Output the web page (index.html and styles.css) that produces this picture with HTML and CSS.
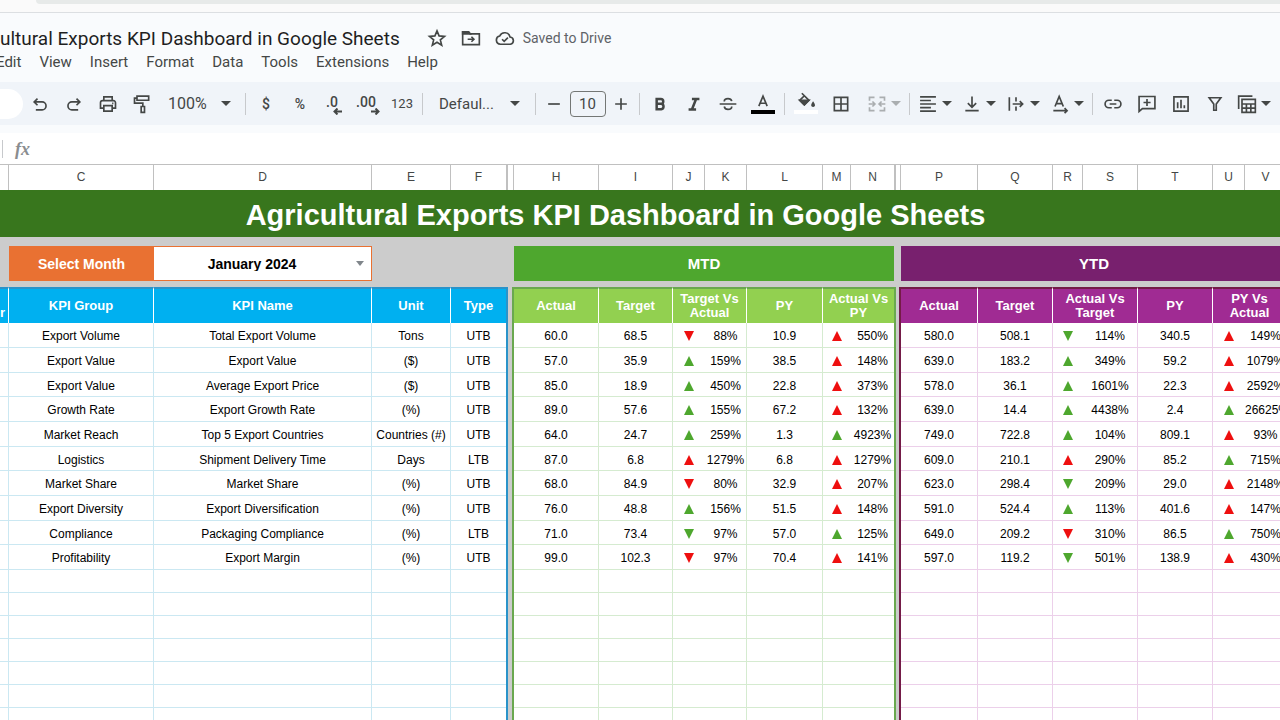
FILE: index.html
```html
<!DOCTYPE html>
<html lang="en">
<head>
  <meta charset="UTF-8" />
  <meta name="viewport" content="width=device-width, initial-scale=1.0" />
  <title>Agricultural Exports KPI Dashboard in Google Sheets</title>
  <link rel="stylesheet" href="styles.css">
</head>
<body>
  <div class="browser-strip"><div class="address-bar"></div></div>

  <header class="doc-header">
    <div class="doc-title-row">
      <h1 class="doc-title">ultural Exports KPI Dashboard in Google Sheets</h1>
      <div class="doc-actions">
        <button class="plain" aria-label="Star">
          <svg class="icon" viewBox="0 0 24 24"><path d="M12 3.500l2.500 6 6.500.5-5 4.200 1.600 6.400-5.600-3.500-5.600 3.500L8 14.200l-5-4.200 6.500-.5z"/></svg>
        </button>
        <button class="plain" aria-label="Move">
          <svg class="icon" viewBox="0 0 24 24"><path d="M2 4.500h7l2 2.500h11v13H2z"/><path d="M2 4.500h7l2 2.500H2z" fill="currentColor"/><path d="M8 13.500h7M12.500 10.500l3 3-3 3"/></svg>
        </button>
        <button class="plain saved">
          <svg class="icon" viewBox="0 0 24 24"><path d="M6.500 19.500a5 5 0 0 1-.8-9.900A6.500 6.500 0 0 1 18 10.800a4.400 4.400 0 0 1 .5 8.700z"/><path d="M8.500 13.500l2.500 2.500 4.500-4.500"/></svg>
          <span>Saved to Drive</span>
        </button>
      </div>
    </div>
    <nav class="menu">
      <button class="plain">Edit</button>
      <button class="plain">View</button>
      <button class="plain">Insert</button>
      <button class="plain">Format</button>
      <button class="plain">Data</button>
      <button class="plain">Tools</button>
      <button class="plain">Extensions</button>
      <button class="plain">Help</button>
    </nav>
  </header>

  <div class="toolbar">
    <input class="menu-search" type="text" aria-label="Search the menus">
    <button class="tool" aria-label="Undo"><svg class="icon" viewBox="0 0 24 24"><path d="M9 5.500L5 9.500l4 4M5 9.500h9.500a4.750 4.750 0 0 1 0 9.500H7"/></svg></button>
    <button class="tool" aria-label="Redo"><svg class="icon" viewBox="0 0 24 24"><path d="M15 5.500l4 4-4 4M19 9.500H9.500a4.750 4.750 0 0 0 0 9.500H17"/></svg></button>
    <button class="tool" aria-label="Print"><svg class="icon" viewBox="0 0 24 24"><path d="M7 8V3.500h10V8M6.500 17H3v-6.500A2.500 2.500 0 0 1 5.500 8h13a2.500 2.500 0 0 1 2.500 2.500V17h-3.500M7 14h10v6.500H7z"/><path d="M17 11.200h1.500"/></svg></button>
    <button class="tool" aria-label="Paint format"><svg class="icon" viewBox="0 0 24 24"><path d="M6 2.500h14v5H6zM6 5H3v6h10v4M11 15h4v7h-4z"/></svg></button>
    <div class="picker zoom">
      <select aria-label="Zoom"><option>100%</option></select><span class="caret"></span>
    </div>
    <span class="sep"></span>
    <button class="tool symbol">$</button>
    <button class="tool symbol">%</button>
    <button class="tool decimal" aria-label="Decrease decimal places"><span>.0</span><svg class="tiny-arrow" viewBox="0 0 9 7"><path d="M9 3.500H1.500M4.500 .5l-3 3 3 3"/></svg></button>
    <button class="tool decimal" aria-label="Increase decimal places"><span>.00</span><svg class="tiny-arrow" viewBox="0 0 9 7"><path d="M0 3.500h7.500M4.500 .5l3 3-3 3"/></svg></button>
    <button class="tool small">123</button>
    <span class="sep"></span>
    <div class="picker font">
      <select aria-label="Font"><option>Defaul...</option></select><span class="caret"></span>
    </div>
    <span class="sep"></span>
    <div class="font-size">
      <button class="step" aria-label="Decrease font size"><svg class="icon" viewBox="0 0 24 24"><path d="M5 12h14"/></svg></button>
      <input type="text" value="10" aria-label="Font size">
      <button class="step" aria-label="Increase font size"><svg class="icon" viewBox="0 0 24 24"><path d="M5 12h14M12 5v14"/></svg></button>
    </div>
    <span class="sep"></span>
    <button class="tool" aria-label="Bold"><svg class="icon heavy" viewBox="0 0 24 24"><path d="M8 6h5a2.900 2.900 0 0 1 0 5.800H8zM8 11.800h5.500a3.300 3.300 0 0 1 0 6.500H8z"/></svg></button>
    <button class="tool" aria-label="Italic"><svg class="icon heavy" viewBox="0 0 24 24"><path d="M9.500 6h9M5.500 18.500h9M14.500 6l-5 12.500"/></svg></button>
    <button class="tool" aria-label="Strikethrough"><svg class="icon" viewBox="0 0 24 24"><path d="M2 12h20M16.500 8.500C16 6.500 14.500 5.500 12 5.500S7.500 6.500 7.500 9M7.500 15c.5 2.500 2 3.500 4.500 3.500s4.500-1 4.500-3.500"/></svg></button>
    <button class="tool swatch text-color" aria-label="Text color"><svg class="icon" viewBox="0 0 24 24"><path d="M7 17L12 5l5 12M8.500 13.500h7"/></svg></button>
    <span class="sep"></span>
    <button class="tool swatch fill-color" aria-label="Fill color"><svg class="icon" viewBox="0 0 24 24"><path d="M7 1.500l8.500 8.500-5.500 5.500L4.500 10 10 4.500"/><path d="M4.500 10h11l-5.500 5.500z" fill="currentColor"/><path d="M20.500 13c2 3 1.500 4 0 4s-2-1 0-4z" fill="currentColor"/></svg></button>
    <button class="tool" aria-label="Borders"><svg class="icon" viewBox="0 0 24 24"><path d="M4 4h16v16H4zM4 12h16M12 4v16"/></svg></button>
    <button class="tool group merge" aria-label="Merge cells" disabled><svg class="icon" viewBox="0 0 24 24"><path d="M9 4H3v4M3 16v4h6M15 4h6v4M21 16v4h-6M2 12h7M6.500 9l3 3-3 3M22 12h-7M17.500 9l-3 3 3 3"/></svg><span class="caret"></span></button>
    <span class="sep"></span>
    <button class="tool group" aria-label="Horizontal align"><svg class="icon" viewBox="0 0 24 24"><path d="M2.500 3.500h19M2.500 7.750h13M2.500 12h19M2.500 16.250h13M2.500 20.500h19"/></svg><span class="caret"></span></button>
    <button class="tool group" aria-label="Vertical align"><svg class="icon" viewBox="0 0 24 24"><path d="M12 3v12.500M7 11l5 5 5-5M4 20h16"/></svg><span class="caret"></span></button>
    <button class="tool group" aria-label="Text wrapping"><svg class="icon" viewBox="0 0 24 24"><path d="M4 4v16M12 4v5M12 15v5M8 12h12M16.500 8.500L20 12l-3.500 3.500"/></svg><span class="caret"></span></button>
    <button class="tool group" aria-label="Text rotation"><svg class="icon" viewBox="0 0 24 24"><path d="M6 15l5-12 5 12M7.500 11.500h7M4 20h16M17.500 17l3 3-3 3"/></svg><span class="caret"></span></button>
    <span class="sep"></span>
    <button class="tool" aria-label="Insert link"><svg class="icon" viewBox="0 0 24 24"><path d="M10.500 7.500H7a4.500 4.500 0 0 0 0 9h3.500M13.500 7.500H17a4.500 4.500 0 0 1 0 9h-3.500M8 12h8"/></svg></button>
    <button class="tool" aria-label="Insert comment"><svg class="icon" viewBox="0 0 24 24"><path d="M2.500 3h19v14.500h-15L2.500 21zM12 6v8.500M7.800 10.200h8.500"/></svg></button>
    <button class="tool" aria-label="Insert chart"><svg class="icon" viewBox="0 0 24 24"><path d="M3.500 3.500h17v17h-17zM8 10v7M12 7v10M16 13.500V17"/></svg></button>
    <button class="tool" aria-label="Create a filter"><svg class="icon" viewBox="0 0 24 24"><path d="M5 4.500h14L13.500 12v7.500h-3V12z"/></svg></button>
    <button class="tool group" aria-label="Table views"><svg class="icon" viewBox="0 0 24 24"><path d="M2 18V2.500h16.500M6 6.500h16V22H6zM6 12h16M6 17h16M11.300 12v10M16.600 12v10"/></svg><span class="caret"></span></button>
  </div>

  <div class="formula-bar">
    <label class="fx" for="formula">fx</label>
    <input id="formula" type="text">
  </div>

  <main class="sheet">
    <table class="grid">
      <colgroup>
        <col class="w9"><col class="w145"><col class="w218"><col class="w79"><col class="w55">
        <col class="w8">
        <col class="w85"><col class="w74"><col class="w32"><col class="w42"><col class="w76"><col class="w28"><col class="w43">
        <col class="w7">
        <col class="w77"><col class="w75"><col class="w30"><col class="w55"><col class="w75"><col class="w32"><col class="w42">
      </colgroup>
      <thead>
        <tr class="letters">
          <th></th><th>C</th><th>D</th><th>E</th><th class="before-gap">F</th>
          <th class="narrow"></th>
          <th>H</th><th>I</th><th>J</th><th>K</th><th>L</th><th>M</th><th class="before-gap">N</th>
          <th class="narrow"></th>
          <th>P</th><th>Q</th><th>R</th><th>S</th><th>T</th><th>U</th><th>V</th>
        </tr>
        <tr class="banner"><td colspan="21">Agricultural Exports KPI Dashboard in Google Sheets</td></tr>
        <tr class="spacer-lg"><td colspan="21"></td></tr>
        <tr class="sections">
          <td></td>
          <td class="month-label"><label for="month">Select Month</label></td>
          <td class="month-cell">
            <div class="month-picker">
              <select id="month"><option>January 2024</option></select><span class="caret"></span>
            </div>
          </td>
          <td colspan="3"></td>
          <th class="mtd" colspan="7">MTD</th>
          <td></td>
          <th class="ytd" colspan="7">YTD</th>
        </tr>
        <tr class="spacer-sm"><td colspan="21"></td></tr>
        <tr class="heads">
          <th class="blue clipped">r</th><th class="blue">KPI Group</th><th class="blue">KPI Name</th><th class="blue">Unit</th><th class="blue last">Type</th>
          <td class="gap-mtd"></td>
          <th class="green">Actual</th><th class="green">Target</th><th class="green" colspan="2">Target Vs Actual</th><th class="green">PY</th><th class="green last" colspan="2">Actual Vs<br>PY</th>
          <td class="gap-ytd"></td>
          <th class="purple">Actual</th><th class="purple">Target</th><th class="purple" colspan="2">Actual Vs Target</th><th class="purple">PY</th><th class="purple" colspan="2">PY Vs<br>Actual</th>
        </tr>
      </thead>
      <tbody id="rows"></tbody>
    </table>
  </main>

  <script>
    // arrows: first letter is direction (u/d), second is colour (r/g)
    const kpis = [
      ["Export Volume", "Total Export Volume", "Tons", "UTB", "60.0", "68.5", "dr", "88%", "10.9", "ur", "550%", "580.0", "508.1", "dg", "114%", "340.5", "ur", "149%"],
      ["Export Value", "Export Value", "($)", "UTB", "57.0", "35.9", "ug", "159%", "38.5", "ur", "148%", "639.0", "183.2", "ug", "349%", "59.2", "ur", "1079%"],
      ["Export Value", "Average Export Price", "($)", "UTB", "85.0", "18.9", "ug", "450%", "22.8", "ur", "373%", "578.0", "36.1", "ug", "1601%", "22.3", "ur", "2592%"],
      ["Growth Rate", "Export Growth Rate", "(%)", "UTB", "89.0", "57.6", "ug", "155%", "67.2", "ur", "132%", "639.0", "14.4", "ug", "4438%", "2.4", "ug", "26625%"],
      ["Market Reach", "Top 5 Export Countries", "Countries (#)", "UTB", "64.0", "24.7", "ug", "259%", "1.3", "ug", "4923%", "749.0", "722.8", "ug", "104%", "809.1", "ur", "93%"],
      ["Logistics", "Shipment Delivery Time", "Days", "LTB", "87.0", "6.8", "ur", "1279%", "6.8", "ur", "1279%", "609.0", "210.1", "ur", "290%", "85.2", "ug", "715%"],
      ["Market Share", "Market Share", "(%)", "UTB", "68.0", "84.9", "dr", "80%", "32.9", "ur", "207%", "623.0", "298.4", "dg", "209%", "29.0", "ur", "2148%"],
      ["Export Diversity", "Export Diversification", "(%)", "UTB", "76.0", "48.8", "ug", "156%", "51.5", "ur", "148%", "591.0", "524.4", "ug", "113%", "401.6", "ur", "147%"],
      ["Compliance", "Packaging Compliance", "(%)", "LTB", "71.0", "73.4", "dg", "97%", "57.0", "ug", "125%", "649.0", "209.2", "dr", "310%", "86.5", "ug", "750%"],
      ["Profitability", "Export Margin", "(%)", "UTB", "99.0", "102.3", "dr", "97%", "70.4", "ur", "141%", "597.0", "119.2", "dg", "501%", "138.9", "ur", "430%"]
    ];
    const emptyRows = 8;
    const body = document.getElementById("rows");

    function addCell(row, value, className) {
      const td = row.insertCell();
      td.className = className;
      if (/^[ud][rg]$/.test(value)) {
        const arrow = document.createElement("span");
        arrow.className = "arrow " + (value[0] === "u" ? "up " : "down ") + (value[1] === "r" ? "bad" : "good");
        td.appendChild(arrow);
      } else {
        td.textContent = value;
      }
    }

    function addRow(values, className) {
      const row = body.insertRow();
      row.className = className;
      addCell(row, "", "kpi");
      values.forEach((value, i) => {
        if (i === 4) addCell(row, "", "gap-mtd");
        if (i === 11) addCell(row, "", "gap-ytd");
        const section = i < 4 ? "kpi" : i < 11 ? "mtd-cell" : "ytd-cell";
        // no line between an arrow and its percentage
        const open = [3, 6, 9, 10, 13, 16].includes(i);
        addCell(row, value, section + (open ? " open" : ""));
      });
    }

    kpis.forEach(kpi => addRow(kpi, "data"));
    for (let i = 0; i < emptyRows; i++) addRow(Array(18).fill(""), "empty");
  </script>
</body>
</html>
```

FILE: styles.css
```css
* { box-sizing: border-box; }
:root {
  --ink: #444746;
  --sheet-gray: #cccccc;
  --good: #4ea72e;
  --bad: #ee0f0f;
}
body {
  margin: 0;
  height: 100vh;
  overflow: hidden;
  background: #fff;
  color: var(--ink);
  font-family: Roboto, sans-serif;
  font-size: 15px;
}
button, input, select {
  font: inherit;
  color: inherit;
  border: none;
  background: none;
  padding: 0;
  margin: 0;
}
select { appearance: none; }

.browser-strip {
  height: 13px;
  background: #fafafa;
  border-bottom: 1px solid #dcdfe2;
}
.address-bar {
  height: 4px;
  margin-left: 36px;
  background: #e7eae9;
  border-bottom-left-radius: 8px;
}

/* document header */
.doc-header {
  height: 69px;
  padding-top: 12px;
  background: #f9fbfd;
}
.doc-title-row {
  display: flex;
  align-items: center;
  height: 26px;
  gap: 27px;
}
.doc-title {
  margin: 0;
  font-size: 19px;
  font-weight: 400;
  color: #1f1f1f;
  white-space: nowrap;
}
.doc-actions {
  display: flex;
  align-items: center;
  gap: 14px;
}
.plain {
  display: flex;
  align-items: center;
  white-space: nowrap;
}
.saved {
  gap: 8px;
  font-size: 14px;
  color: #5f6368;
}
.menu {
  display: flex;
  gap: 18px;
  height: 22px;
  margin-left: -4px;
}

.icon {
  width: 20px;
  height: 20px;
  flex: none;
  fill: none;
  stroke: currentColor;
  stroke-width: 2;
  color: var(--ink);
}
.heavy { stroke-width: 3; }

/* toolbar */
.toolbar {
  display: flex;
  align-items: center;
  height: 43px;
  background: #f0f4f9;
}
.menu-search {
  width: 23px;
  height: 30px;
  background: #fff;
  border-radius: 0 15px 15px 0;
}
.tool {
  display: flex;
  align-items: center;
  justify-content: center;
  flex: none;
  width: 34px;
  height: 30px;
}
.group {
  width: 44px;
  gap: 4px;
}
.merge {
  margin-left: 4px;
  opacity: 0.4;
}
.symbol { font-size: 14px; font-weight: 500; }
.small { font-size: 13px; }
.decimal {
  padding-bottom: 4px;
  font-size: 14px;
  font-weight: 500;
}
.tiny-arrow {
  flex: none;
  width: 9px;
  height: 7px;
  margin-left: -5px;
  align-self: flex-end;
  fill: none;
  stroke: var(--ink);
  stroke-width: 2;
}
.caret {
  flex: none;
  border: 5px solid transparent;
  border-top-color: var(--ink);
  border-bottom: none;
}
.sep {
  flex: none;
  width: 1px;
  height: 22px;
  margin: 0 3px;
  background: #c7c9cc;
}
.picker {
  display: flex;
  align-items: center;
  justify-content: space-between;
  flex: none;
}
.zoom {
  width: 83px;
  padding: 0 11px 0 9px;
  font-size: 16px;
}
.font {
  width: 106px;
  padding: 0 12px 0 13px;
}
.font-size {
  display: flex;
  align-items: center;
  width: 97px;
}
.font-size input {
  width: 36px;
  height: 26px;
  text-align: center;
  border: 1px solid #747775;
  border-radius: 4px;
}
.step {
  display: flex;
  justify-content: center;
  width: 31px;
}
.swatch {
  position: relative;
  width: 36px;
  padding-bottom: 4px;
}
.swatch::after {
  content: "";
  position: absolute;
  left: 6px;
  right: 6px;
  bottom: 5px;
  height: 4px;
  background: #000;
}
.fill-color::after { background: #fff; }

/* formula bar */
.formula-bar {
  display: flex;
  align-items: center;
  height: 40px;
  padding-left: 2px;
  border-top: 8px solid #f9fbfd;
  border-bottom: 1px solid #c0c0c0;
}
.fx {
  padding-left: 12px;
  border-left: 1px solid #c7c9cc;
  font-family: "Liberation Serif", serif;
  font-style: italic;
  font-weight: bold;
  font-size: 18px;
  line-height: 18px;
  color: #8a8d90;
}
.formula-bar input {
  flex: 1;
  margin-left: 12px;
}

/* sheet */
.sheet { overflow: hidden; }
.grid {
  width: 1287px;
  table-layout: fixed;
  border-collapse: separate;
  border-spacing: 0;
  background: var(--sheet-gray);
  font-family: "Liberation Sans", sans-serif;
  font-size: 12px;
  color: #000;
}
.w7 { width: 7px; }
.w8 { width: 8px; }
.w9 { width: 9px; }
.w28 { width: 28px; }
.w30 { width: 30px; }
.w32 { width: 32px; }
.w42 { width: 42px; }
.w43 { width: 43px; }
.w55 { width: 55px; }
.w74 { width: 74px; }
.w75 { width: 75px; }
.w76 { width: 76px; }
.w77 { width: 77px; }
.w79 { width: 79px; }
.w85 { width: 85px; }
.w145 { width: 145px; }
.w218 { width: 218px; }

.grid td, .grid th {
  padding: 0;
  text-align: center;
  white-space: nowrap;
  line-height: 14px;
}
.grid .letters th {
  height: 25px;
  padding-bottom: 2px;
  background: #fff;
  border-right: 1px solid #c0c0c0;
  font-weight: 400;
  color: var(--ink);
}
.grid .letters .before-gap { border-right: none; }
.grid .letters .narrow { border-left: 2px solid #c0c0c0; }

.grid .banner td {
  height: 47px;
  padding: 2px 56px 0 0;
  background: #38761d;
  color: #fff;
  font-size: 29px;
  font-weight: bold;
  line-height: 32px;
}
.grid .spacer-lg td { height: 9px; line-height: 1px; }
.grid .spacer-sm td { height: 6px; line-height: 1px; }

.sections > * {
  height: 35px;
  font-size: 15px;
  font-weight: bold;
}
.sections th { color: #fff; }
.sections .month-label {
  background: #e97132;
  color: #fff;
  font-size: 14px;
}
.month-cell {
  background: #fff;
  border: 1px solid #e97132;
  border-left: none;
}
.month-picker {
  display: flex;
  align-items: center;
  gap: 6px;
  padding-right: 7px;
}
.month-picker select {
  flex: 1;
  text-align: center;
  text-align-last: center;
  font-size: 14px;
  color: #000;
}
.month-picker .caret {
  border-width: 5px 4px 0;
  border-top-color: #80868b;
}
.mtd { background: #4ea72e; }
.ytd { background: #78206e; }

.heads > * {
  height: 36px;
  font-size: 13px;
}
.grid .heads th {
  color: #fff;
  border-right: 1px solid #fff;
  white-space: normal;
}
.grid .heads .last { border-right: none; }
.blue { background: #00b0f0; border-top: 2px solid #2a93c9; }
.green { background: #92d050; border-top: 2px solid #6aa84f; }
.purple { background: #a02b93; border-top: 2px solid #741b47; }
.grid .heads .clipped {
  padding-bottom: 3px;
  text-align: left;
  vertical-align: bottom;
}

.data td { height: 25px; }
.data:nth-child(3n) td { height: 24px; }
.grid .data td { padding-top: 2px; }
.empty td { height: 23px; }
.kpi, .mtd-cell, .ytd-cell {
  background: #fff;
  border-right: 1px solid;
  border-bottom: 1px solid;
}
.kpi { border-color: #cbe8f2; }
.mtd-cell { border-color: #d5ebd0; }
.ytd-cell { border-color: #ecd0ea; }
.grid .open { border-right: none; }
.gap-mtd {
  border-left: 2px solid #2a93c9;
  border-right: 2px solid #6aa84f;
}
.gap-ytd {
  border-left: 2px solid #6aa84f;
  border-right: 2px solid #741b47;
}

.arrow {
  display: block;
  width: 0;
  margin: 0 auto;
  border: 5px solid transparent;
}
.up { border-top: none; border-bottom-width: 10px; }
.down { border-bottom: none; border-top-width: 10px; }
.up.good { border-bottom-color: var(--good); }
.up.bad { border-bottom-color: var(--bad); }
.down.good { border-top-color: var(--good); }
.down.bad { border-top-color: var(--bad); }
```
